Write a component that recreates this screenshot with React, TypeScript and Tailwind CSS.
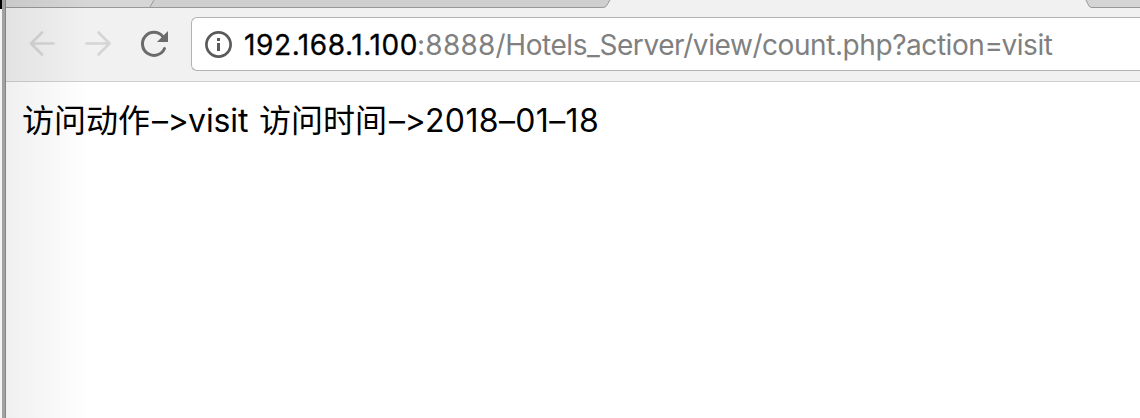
function TabStrip() {
  return (
    <svg className="block h-2 w-full shrink-0" viewBox="0 0 1134 8" aria-hidden="true">
      <rect width="1134" height="8" fill="#f1f1f1" />
      <path d="M0 0H148L144 7.5H0Z" fill="#d6d6d6" />
      <path d="M148 0H604L601 5Q600 7.5 597 7.5H144Z" fill="#cfcfcf" />
      <path d="M1080 0L1083 6Q1084 7.5 1086 7.5H1134V0Z" fill="#d5d5d5" />
      <path d="M0 7.5H597Q600 7.5 601 5L604 0M148 0L144 7" fill="none" stroke="#999" />
      <path d="M1080 0L1083 6Q1084 7.5 1086 7.5H1134" fill="none" stroke="#999" />
    </svg>
  );
}

function NavButtons() {
  return (
    <svg className="block h-[73px] w-[185px] shrink-0" viewBox="0 0 185 73" fill="none" aria-hidden="true">
      <g stroke="#d5d5d5" strokeWidth="2.7" strokeLinecap="round" strokeLinejoin="round">
        <path d="M47.5 35.5H25M36 24.5L25 35.5L36 46.5" />
        <path d="M80.5 35.5H103M92.5 24.5L103.5 35.5L92.5 46.5" />
      </g>
      <path d="M158.5 40.5A11.5 11.5 0 1 1 156.8 28.5" stroke="#6b6b6b" strokeWidth="3" strokeLinecap="round" />
      <path d="M162 23V34H151Z" fill="#6b6b6b" />
    </svg>
  );
}

function InfoIcon() {
  return (
    <svg className="block size-7 shrink-0" viewBox="0 0 28 28" aria-hidden="true">
      <circle cx="14.5" cy="14.5" r="12.1" fill="none" stroke="#5a5a5a" strokeWidth="2.7" />
      <rect x="13" y="8" width="3" height="3" fill="#5a5a5a" />
      <rect x="13" y="13" width="3" height="8" fill="#5a5a5a" />
    </svg>
  );
}

export default function App() {
  return (
    <div className="relative flex h-[418px] w-[1140px] overflow-hidden bg-white font-['Inter','Noto_Sans_CJK_SC',sans-serif]">
      <div className="flex w-0.5 shrink-0 flex-col bg-[#f4f4f4]">
        <div className="h-[9px] bg-black" />
      </div>
      <div className="w-1 shrink-0 border-r border-[#848484] bg-[#a2a2a2]" />
      <div className="flex min-w-0 flex-1 flex-col">
        <TabStrip />
        <header className="flex h-[74px] shrink-0 border-b border-[#cfcfcf] bg-[#f1f1f1]">
          <NavButtons />
          <div className="mt-[9px] flex h-[54px] flex-1 items-center rounded-l-[6px] border border-r-0 border-[#b3b3b3] bg-white pl-3">
            <InfoIcon />
            <div className="ml-3 flex whitespace-nowrap pt-0.5 text-[28px] leading-[36px] text-[#808080]">
              <span className="w-[173px] tracking-[0.6px] text-black [-webkit-text-stroke:0.3px_black]">192.168.1.100</span>
              <span className="tracking-[0.25px]">:8888</span>
              <span className="tracking-[-0.43px]">/Hotels_Server/view/count.php?action=visit</span>
            </div>
          </div>
        </header>
        <main className="flex-1 bg-white pl-4 pt-4">
          <p className="flex whitespace-pre text-[32px] leading-[46px] text-black [font-feature-settings:'calt'_0,'liga'_0]">
            <span className="w-32">访问动作</span>
            <span className="w-[38px] pl-0.5 tracking-[-0.5px]">–&gt;</span>
            <span className="w-[71px] tracking-[-0.1px]">visit </span>
            <span className="w-32">访问时间</span>
            <span className="w-[38px] pl-0.5 tracking-[-0.5px]">–&gt;</span>
            <span className="tracking-[0.35px]">2018–01–18</span>
          </p>
        </main>
      </div>
      <div className="pointer-events-none absolute inset-y-0 left-1.5 w-[84px] bg-linear-to-r from-black/6 to-transparent" />
    </div>
  );
}
